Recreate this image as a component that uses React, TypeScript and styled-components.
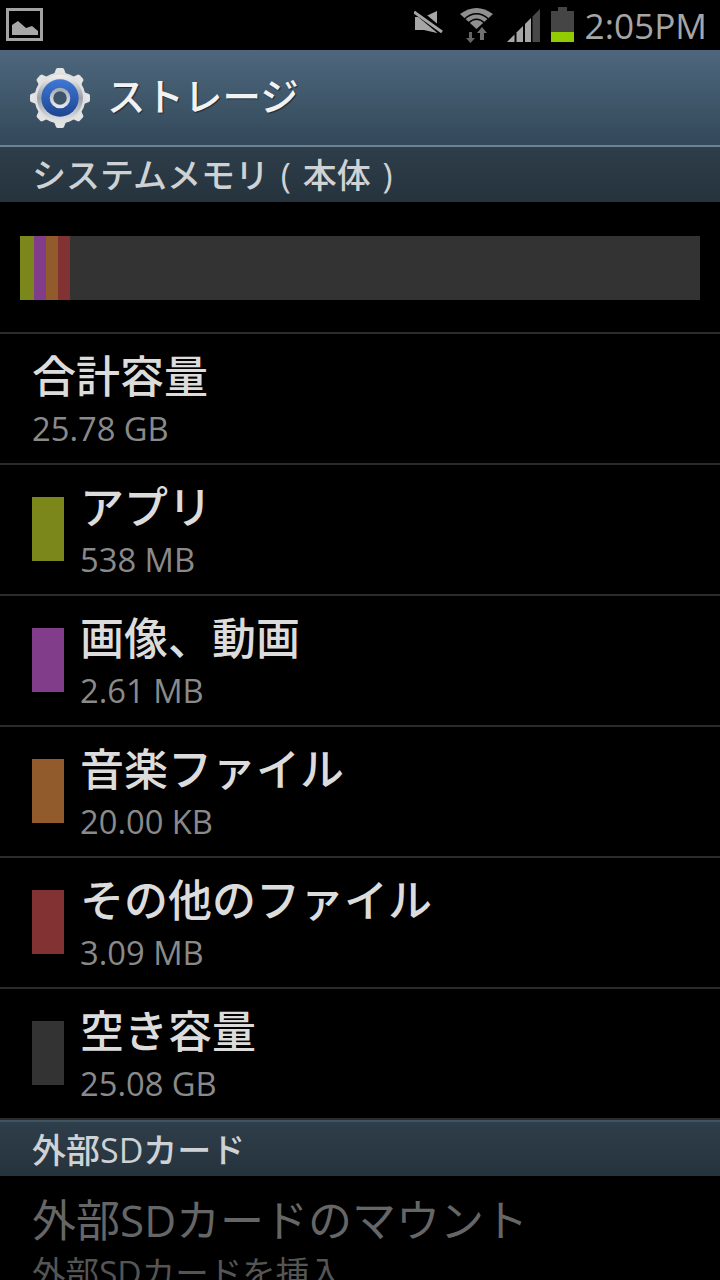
import React from "react";
import styled, { createGlobalStyle } from "styled-components";

const GlobalStyle = createGlobalStyle`
  html, body {
    margin: 0;
    padding: 0;
    background: #000;
  }
  body {
    font-family: "Open Sans", "Noto Sans CJK JP", sans-serif;
  }
`;

const Screen = styled.div`
  width: 720px;
  height: 1280px;
  overflow: hidden;
  background: #000;
  display: flex;
  flex-direction: column;
`;

const StatusBar = styled.div`
  flex: 0 0 50px;
  height: 50px;
  display: flex;
  align-items: center;
  padding: 0 13px 0 6px;
  box-sizing: border-box;
`;

const StatusRight = styled.div`
  margin-left: auto;
  display: flex;
  align-items: center;
`;

const StatusIcon = styled.svg<{ $gap?: number }>`
  display: block;
  height: 50px;
  margin-right: ${(p) => p.$gap ?? 0}px;
`;

const Clock = styled.div`
  font-family: "Open Sans", sans-serif;
  font-size: 35.2px;
  color: #a6a6a6;
  line-height: 50px;
  margin-left: 11px;
`;

const ActionBar = styled.div`
  flex: 0 0 95px;
  height: 95px;
  box-sizing: border-box;
  display: flex;
  align-items: center;
  padding: 0 0 0 29px;
  background: linear-gradient(#4e677d, #33495a);
`;

const ActionTitle = styled.div`
  font-family: "Noto Sans CJK JP", sans-serif;
  font-size: 38.5px;
  font-weight: 500;
  color: #f2f2f2;
  margin-left: 16px;
  padding-bottom: 8px;
  text-shadow: 1px 1px 1px #1c2a35;
`;

const Section = styled.div<{ $top?: boolean }>`
  flex: 0 0 ${(p) => (p.$top ? 57 : 56)}px;
  box-sizing: border-box;
  display: flex;
  align-items: center;
  padding: 0 0 2px 32px;
  font-family: "Open Sans", "Noto Sans CJK JP", sans-serif;
  font-size: 34px;
  font-weight: 500;
  word-spacing: 3px;
  white-space: pre;
  color: #cfd2d4;
  background: linear-gradient(#2e3e4a, #25333d);
  border-top: 2px solid ${(p) => (p.$top ? "#6d8292" : "#3f5362")};
`;

const BarArea = styled.div`
  flex: 0 0 132px;
  box-sizing: border-box;
  padding: 34px 20px 0;
  border-bottom: 2px solid #2b2b2b;
`;

const Bar = styled.div`
  display: flex;
  height: 64px;
  background: #333333;
`;

const BarPart = styled.div<{ $color: string; $width: number }>`
  width: ${(p) => p.$width}px;
  background: ${(p) => p.$color};
`;

const Row = styled.div`
  flex: 0 0 131px;
  box-sizing: border-box;
  display: flex;
  align-items: center;
  padding-left: 32px;
  border-bottom: 2px solid #2b2b2b;
`;

const Swatch = styled.div<{ $color: string }>`
  width: 32px;
  height: 64px;
  margin: 0 16px 2px 0;
  background: ${(p) => p.$color};
`;

const RowText = styled.div`
  display: flex;
  flex-direction: column;
  padding-bottom: 4px;
`;

const Title = styled.div<{ $dim?: boolean }>`
  font-family: "Open Sans", "Noto Sans CJK JP", sans-serif;
  font-size: 44px;
  font-weight: ${(p) => (p.$dim ? 400 : 500)};
  line-height: 62px;
  color: ${(p) => (p.$dim ? "#666666" : "#dcdcdc")};
  white-space: nowrap;
`;

const Sub = styled.div<{ $dim?: boolean }>`
  font-family: "Open Sans", "Noto Sans CJK JP", sans-serif;
  font-size: ${(p) => (p.$dim ? 33.5 : 32.7)}px;
  line-height: 40px;
  margin-top: ${(p) => (p.$dim ? 1 : 2)}px;
  color: ${(p) => (p.$dim ? "#555555" : "#8a8a8a")};
  white-space: nowrap;
`;

const MountRow = styled.div`
  padding: 13px 0 0 32px;
`;

const GalleryIcon = () => (
  <StatusIcon width="38" viewBox="0 0 38 50">
    <rect x="1.5" y="9.5" width="34" height="30" fill="none" stroke="#a3a3a3" strokeWidth="3" />
    <path d="M6 35 V25 L12 21 L20 28 L26 26 L32 31 V35 Z" fill="#a8a8a8" />
  </StatusIcon>
);

const MuteIcon = () => (
  <StatusIcon width="29" $gap={17} viewBox="0 0 29 50">
    <path d="M1 17 H10 L23 11 V33 L10 30 H1 Z" fill="#a6a6a6" />
    <path d="M0 9 L29 33" stroke="#000" strokeWidth="7" />
    <path d="M0 12 L28 32" stroke="#a6a6a6" strokeWidth="3" />
  </StatusIcon>
);

const WifiIcon = () => (
  <StatusIcon width="33" $gap={14} viewBox="0 0 33 50">
    <path d="M16.5 29 L0 14 Q16.5 2 33 14 Z" fill="#8f8f8f" />
    <path d="M4.5 19 Q16.5 8.5 28.5 19" fill="none" stroke="#000" strokeWidth="1.6" />
    <path d="M8.5 23 Q16.5 15.5 24.5 23" fill="none" stroke="#000" strokeWidth="1.6" />
    <path d="M9 32 V38 H6 L10.5 43 L15 38 H12 V32 Z" fill="#666" />
    <path d="M20 40 V33 H17 L22 27 L27 33 H24 V40 Z" fill="#707070" />
  </StatusIcon>
);

const SignalIcon = () => (
  <StatusIcon width="33" $gap={11} viewBox="0 0 33 50">
    <path d="M0 42 L7.5 34.5 V42 Z" fill="#a6a6a6" />
    <path d="M9.5 42 V32.5 L16 26 V42 Z" fill="#a6a6a6" />
    <path d="M18 42 V24 L24 18 V42 Z" fill="#a6a6a6" />
    <path d="M25.5 42 V16.5 L33 9 V42 Z" fill="#484848" />
  </StatusIcon>
);

const BatteryIcon = () => (
  <StatusIcon width="23" viewBox="0 0 23 50">
    <path d="M7 7 H16 V11 H23 V42 H0 V11 H7 Z" fill="#454545" />
    <rect x="0" y="32" width="23" height="10" fill="#92cc00" />
  </StatusIcon>
);

const teeth = [0, 45, 90, 135, 180, 225, 270, 315];

const GearIcon = () => (
  <svg width="62" height="62" viewBox="0 0 62 62">
    <defs>
      <linearGradient id="ring" x1="0" y1="0" x2="0" y2="1">
        <stop offset="0" stopColor="#f2f2f2" />
        <stop offset="0.5" stopColor="#9aa0a8" />
        <stop offset="1" stopColor="#dfe1e4" />
      </linearGradient>
      <linearGradient id="blue" x1="0" y1="0" x2="0" y2="1">
        <stop offset="0" stopColor="#3f78d4" />
        <stop offset="1" stopColor="#1d4591" />
      </linearGradient>
      <linearGradient id="hub" x1="0" y1="0" x2="0" y2="1">
        <stop offset="0" stopColor="#a9afb7" />
        <stop offset="1" stopColor="#e6e8ea" />
      </linearGradient>
    </defs>
    {teeth.map((a) => (
      <path
        key={a}
        d="M24 10 L27 2 Q27.5 1 29 1 H33 Q34.5 1 35 2 L38 10 Z"
        fill="#e4e4e4"
        transform={`rotate(${a} 31 31)`}
      />
    ))}
    <circle cx="31" cy="31" r="25.5" fill="#e0e0e0" />
    <circle cx="31" cy="31" r="23" fill="url(#ring)" />
    <circle cx="31" cy="31" r="18.7" fill="url(#blue)" />
    <circle cx="31" cy="31" r="8.5" fill="#3e5468" stroke="url(#hub)" strokeWidth="3.5" />
  </svg>
);

const parts = [
  { color: "#7b861b", width: 14 },
  { color: "#813d8a", width: 12 },
  { color: "#925b2b", width: 12 },
  { color: "#823232", width: 12 },
];

const rows = [
  { title: "アプリ", sub: "538 MB", color: "#7b861b" },
  { title: "画像、動画", sub: "2.61 MB", color: "#813d8a" },
  { title: "音楽ファイル", sub: "20.00 KB", color: "#925b2b" },
  { title: "その他のファイル", sub: "3.09 MB", color: "#823232" },
  { title: "空き容量", sub: "25.08 GB", color: "#333333" },
];

export default function App() {
  return (
    <Screen>
      <GlobalStyle />
      <StatusBar>
        <GalleryIcon />
        <StatusRight>
          <MuteIcon />
          <WifiIcon />
          <SignalIcon />
          <BatteryIcon />
          <Clock>2:05PM</Clock>
        </StatusRight>
      </StatusBar>
      <ActionBar>
        <GearIcon />
        <ActionTitle>ストレージ</ActionTitle>
      </ActionBar>
      <Section $top>システムメモリ ( 本体 )</Section>
      <BarArea>
        <Bar>
          {parts.map((p) => (
            <BarPart key={p.color} $color={p.color} $width={p.width} />
          ))}
        </Bar>
      </BarArea>
      <Row>
        <RowText>
          <Title>合計容量</Title>
          <Sub>25.78 GB</Sub>
        </RowText>
      </Row>
      {rows.map((r) => (
        <Row key={r.title}>
          <Swatch $color={r.color} />
          <RowText>
            <Title>{r.title}</Title>
            <Sub>{r.sub}</Sub>
          </RowText>
        </Row>
      ))}
      <Section>外部SDカード</Section>
      <MountRow>
        <Title $dim>外部SDカードのマウント</Title>
        <Sub $dim>外部SDカードを挿入</Sub>
      </MountRow>
    </Screen>
  );
}
